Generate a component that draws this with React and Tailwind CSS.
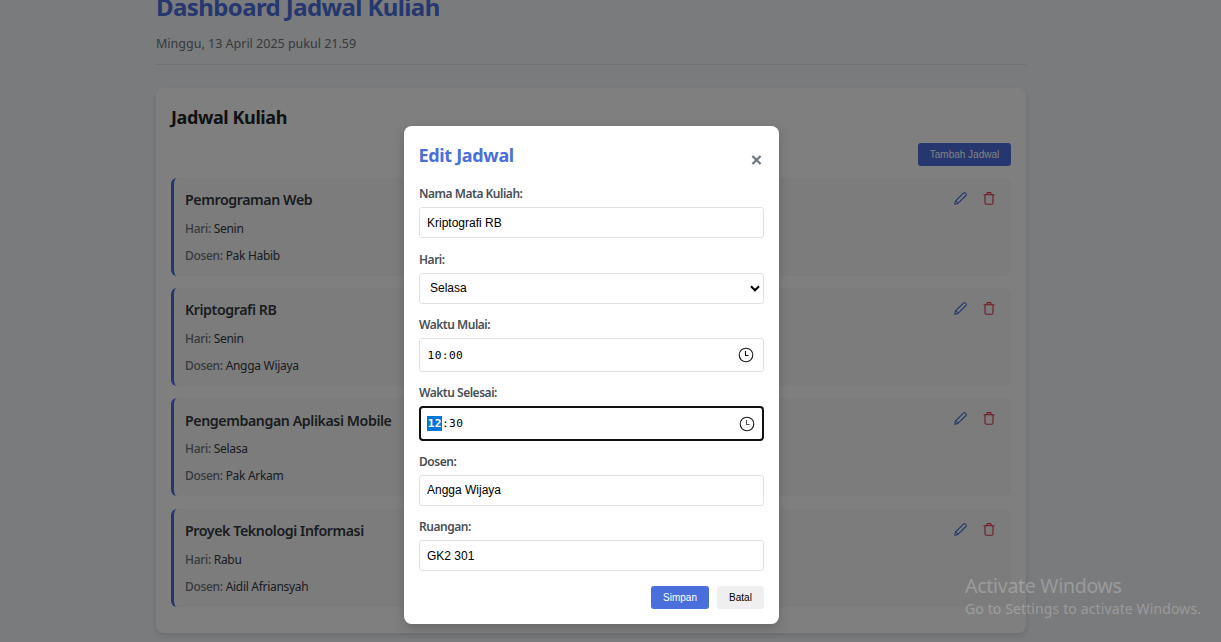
const items = [
  { name: "Pemrograman Web", day: "Senin", lecturer: "Pak Habib" },
  { name: "Kriptografi RB", day: "Senin", lecturer: "Angga Wijaya" },
  { name: "Pengembangan Aplikasi Mobile", day: "Selasa", lecturer: "Pak Arkam" },
  { name: "Proyek Teknologi Informasi", day: "Rabu", lecturer: "Aidil Afriansyah" },
];

function PencilIcon() {
  return (
    <svg className="h-[13px] w-[13px]" viewBox="0 0 13 13" fill="none" stroke="currentColor" strokeWidth="1.1" strokeLinejoin="round">
      <path d="M.7 12.3l.8-3.3L9.4 1.1q.6-.6 1.2-.4.8.2 1.3.8.6.7.4 1.3-.1.3-.4.7L4 11.4zM1.5 9q1.9.3 2.5 2.4" />
    </svg>
  );
}

function TrashIcon() {
  return (
    <svg className="h-[13px] w-[12px]" viewBox="0 0 12 13" fill="none" stroke="currentColor" strokeWidth="1.1">
      <path d="M.5 2.7h11M4 2.7V1.4q0-.8.8-.8h2.4q.8 0 .8.8v1.3M2 2.7v8q0 1.6 1.4 1.6h5.2q1.4 0 1.4-1.6v-8" />
    </svg>
  );
}

function ClockIcon({ hands = "#111" }) {
  return (
    <svg className="h-4 w-4" viewBox="0 0 16 16" fill="none" stroke="#1a1a1a" strokeWidth="1.1">
      <circle cx="8" cy="8" r="6.8" />
      <path d="M7.5 4v4.5h3" stroke={hands} />
    </svg>
  );
}

function ScheduleItem({ name, day, lecturer }) {
  return (
    <div className="flex h-[98px] justify-between rounded-[6px] border-l-[3px] border-[#4a6fdc] bg-[#f8f9fa] pr-[16px] pl-[11px]">
      <div>
        <h3 className="mt-[11.5px] text-[14.2px] leading-[22px] font-semibold tracking-[-0.41px] text-[#343a40]">{name}</h3>
        <p className="mt-[8.5px] text-[12px] leading-[18px] tracking-[-0.3px] text-[#343a40]">
          <span className="font-medium text-[#6c757d]">Hari:</span> {day}
        </p>
        <p className="mt-[9px] text-[12px] leading-[18px] tracking-[-0.3px] text-[#343a40]">
          <span className="font-medium text-[#6c757d]">Dosen:</span> {lecturer}
        </p>
      </div>
      <div className="flex gap-[16px] pt-[14px]">
        <span className="text-[#4a6fdc]"><PencilIcon /></span>
        <span className="text-[#dc3545]"><TrashIcon /></span>
      </div>
    </div>
  );
}

function Label({ children }) {
  return <div className="h-[20px] text-[12px] leading-[18px] font-semibold tracking-[-0.48px] text-[#495057]">{children}</div>;
}

const box = "flex items-center rounded-[3px] border border-[#dee2e6] bg-white px-[7px] text-[12px] text-black font-['Liberation_Sans',sans-serif]";

export default function App() {
  return (
    <div className="h-[642px] w-[1221px] overflow-hidden bg-[#f5f7fa] font-['Noto_Sans',sans-serif]">
      <div className="mr-[195px] ml-[156px] h-[642px]">
        <header className="-mt-[10px] h-[75px] border-b border-[#dee2e6]">
          <h1 className="text-[24px] leading-[34px] font-bold tracking-[-0.6px] text-[#4a6fdc]">Dashboard Jadwal Kuliah</h1>
          <p className="mt-[11px] text-[12.5px] leading-[18px] text-[#6c757d]">Minggu, 13 April 2025 pukul 21.59</p>
        </header>
        <section className="mt-[23px] h-[545px] rounded-[7.5px] bg-white px-[15px] pt-[15px] shadow-[0_3px_6px_rgba(0,0,0,0.12)]">
          <h2 className="text-[18px] leading-[28px] font-bold tracking-[-0.4px] text-[#212529]">Jadwal Kuliah</h2>
          <div className="mt-[12px] flex justify-end">
            <button className="h-[23px] w-[93px] rounded-[3px] bg-[#4a6fdc] font-['Liberation_Sans',sans-serif] text-[10px] text-white">Tambah Jadwal</button>
          </div>
          <div className="mt-[11.5px] flex flex-col gap-[12.4px]">
            {items.map((item) => (
              <ScheduleItem key={item.name} {...item} />
            ))}
          </div>
        </section>
      </div>

      <div className="absolute inset-0 bg-black/50">
        <div className="mt-[126px] ml-[404px] h-[498px] w-[375px] rounded-[7.5px] bg-white px-[15px] pt-[15px] shadow-[0_4px_12px_rgba(0,0,0,0.2)]">
          <div className="flex h-[44px] justify-between">
            <h2 className="-ml-[0.5px] text-[18px] leading-[28px] font-bold tracking-[-0.33px] text-[#4a6fdc]">Edit Jadwal</h2>
            <svg className="mt-[14px] mr-[2px] h-[10px] w-[11px]" viewBox="0 0 11 10" stroke="#6c757d" strokeWidth="2.2">
              <path d="M1.4 1l8.2 8M9.6 1L1.4 9" />
            </svg>
          </div>
          <div className="flex flex-col">
            <Label>Nama Mata Kuliah:</Label>
            <div className={`${box} mt-[2px] mb-[13px] h-[31px]`}>Kriptografi RB</div>
            <Label>Hari:</Label>
            <div className={`${box} mt-[2px] mb-[12px] h-[31px] justify-between`}>
              <span className="pb-[2px] pl-[3px]">Selasa</span>
              <svg className="-mr-[4px] h-[7px] w-[10px]" viewBox="0 0 10 7" fill="none" stroke="#000" strokeWidth="2.1">
                <path d="M1 1.2l4 4 4-4" />
              </svg>
            </div>
            <Label>Waktu Mulai:</Label>
            <div className={`${box} mt-[2px] mb-[12px] h-[34px] justify-between`}>
              <span className="pt-[2px] pl-[0.5px] font-['DejaVu_Sans_Mono',monospace] text-[11.2px] tracking-[0.4px]">10:00</span>
              <span className="mr-[2px]"><ClockIcon /></span>
            </div>
            <Label>Waktu Selesai:</Label>
            <div className="mt-[2px] mb-[12px] flex h-[35px] items-center justify-between rounded-[4px] border-2 border-[#101010] px-[6px] font-['DejaVu_Sans_Mono',monospace] text-[11.2px] tracking-[0.4px] text-black">
              <span className="flex items-center"><span className="bg-[#0078d7] pt-px pl-[0.7px] leading-[14px] font-bold text-white">12</span><span className="pt-px">:30</span></span>
              <span className="mr-[1.5px]"><ClockIcon hands="#555" /></span>
            </div>
            <Label>Dosen:</Label>
            <div className={`${box} mt-[2px] mb-[12px] h-[31px] pb-[2px]`}>Angga Wijaya</div>
            <Label>Ruangan:</Label>
            <div className={`${box} mt-[2px] h-[31px]`}>GK2 301</div>
          </div>
          <div className="mt-[15px] flex justify-end gap-[8px] font-['Liberation_Sans',sans-serif] text-[10px]">
            <button className="h-[23px] w-[58px] rounded-[3px] bg-[#4a6fdc] text-white">Simpan</button>
            <button className="h-[23px] w-[47px] rounded-[3px] bg-[#efefef] text-black">Batal</button>
          </div>
        </div>
      </div>

      <div className="absolute top-[573px] left-[965px] whitespace-nowrap text-white/25">
        <div className="text-[19.5px] leading-[26px] tracking-[-0.28px]">Activate Windows</div>
        <div className="text-[14px] leading-[20px] tracking-[0.12px]">Go to Settings to activate Windows.</div>
      </div>
    </div>
  );
}
